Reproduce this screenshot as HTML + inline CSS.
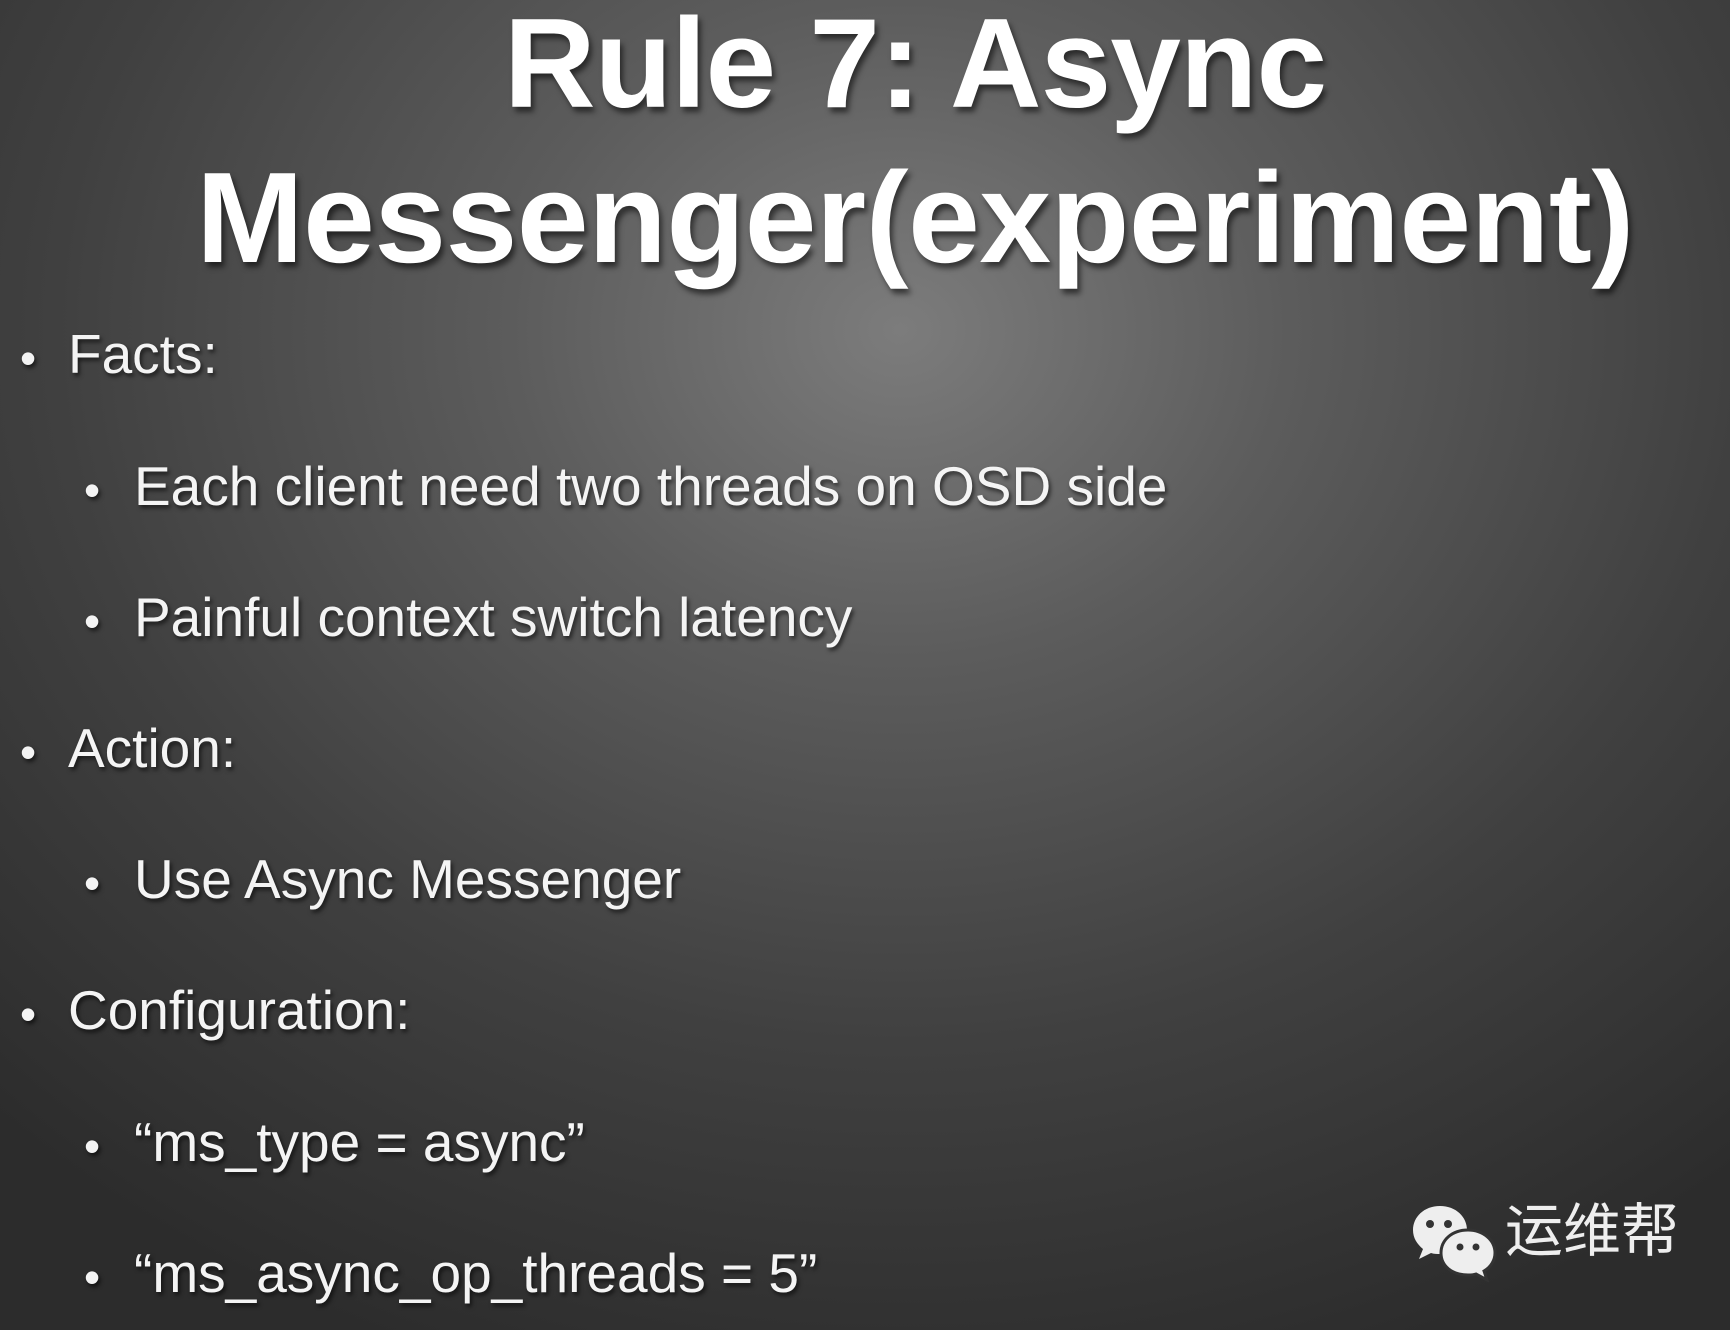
<!DOCTYPE html>
<html><head><meta charset="utf-8"><style>
html,body{margin:0;padding:0}
body{width:1730px;height:1330px;overflow:hidden;position:relative;
background:radial-gradient(ellipse 1300px 1100px at 900px 330px,#7c7c7c 0%,#5c5c5c 30%,#404040 65%,#2c2c2c 100%);
font-family:"Liberation Sans",Arial,sans-serif;color:#f4f4f4}
.t{position:absolute;left:0;width:1730px;text-align:center;font-weight:bold;line-height:1;color:#fff;text-shadow:3px 5px 6px rgba(0,0,0,.55);padding-left:100px;box-sizing:border-box}
.l{position:absolute;font-size:55px;line-height:1;white-space:nowrap;text-shadow:2px 3px 4px rgba(0,0,0,.6)}
.b{position:absolute;font-size:46px;line-height:1;text-shadow:2px 3px 4px rgba(0,0,0,.6)}
.logo{position:absolute;left:1505px;top:1203px;font-family:"Liberation Sans","Noto Sans CJK SC",sans-serif;font-size:58px;color:#eee;line-height:1}
</style></head><body>
<div class="t" style="top:0px;font-size:127px;letter-spacing:-1px">Rule 7: Async</div>
<div class="t" style="top:154px;font-size:129px;letter-spacing:-0.5px">Messenger(experiment)</div>

<div class="b" style="left:20px;top:335px">•</div><div class="l" style="left:68px;top:327px">Facts:</div>
<div class="b" style="left:84px;top:467px">•</div><div class="l" style="left:134px;top:459px">Each client need two threads on OSD side</div>
<div class="b" style="left:84px;top:598px">•</div><div class="l" style="left:134px;top:590px">Painful context switch latency</div>
<div class="b" style="left:20px;top:729px">•</div><div class="l" style="left:68px;top:721px">Action:</div>
<div class="b" style="left:84px;top:860px">•</div><div class="l" style="left:134px;top:852px">Use Async Messenger</div>
<div class="b" style="left:20px;top:991px">•</div><div class="l" style="left:68px;top:983px">Configuration:</div>
<div class="b" style="left:84px;top:1123px">•</div><div class="l" style="left:134px;top:1115px">“ms_type = async”</div>
<div class="b" style="left:84px;top:1254px">•</div><div class="l" style="left:134px;top:1246px">“ms_async_op_threads = 5”</div>

<svg style="position:absolute;left:1410px;top:1200px" width="90" height="82" viewBox="0 0 90 82">
<path d="M30 6C14 6 3 17 3 30c0 8 4 14 10 19l-4 10 12-6c3 1 6 1 9 1 16 0 27-11 27-24S46 6 30 6z" fill="#eee"/>
<circle cx="20" cy="24" r="4" fill="#333"/><circle cx="38" cy="24" r="4" fill="#333"/>
<path d="M58 30c-16 0-27 10-27 23s11 22 27 22c3 0 5 0 8-1l11 6-3-9c7-4 11-11 11-18 0-13-12-23-27-23z" fill="#eee" stroke="#333" stroke-width="3"/>
<circle cx="50" cy="47" r="3.5" fill="#333"/><circle cx="66" cy="47" r="3.5" fill="#333"/>
</svg>
<div class="logo">运维帮</div>
</body></html>
